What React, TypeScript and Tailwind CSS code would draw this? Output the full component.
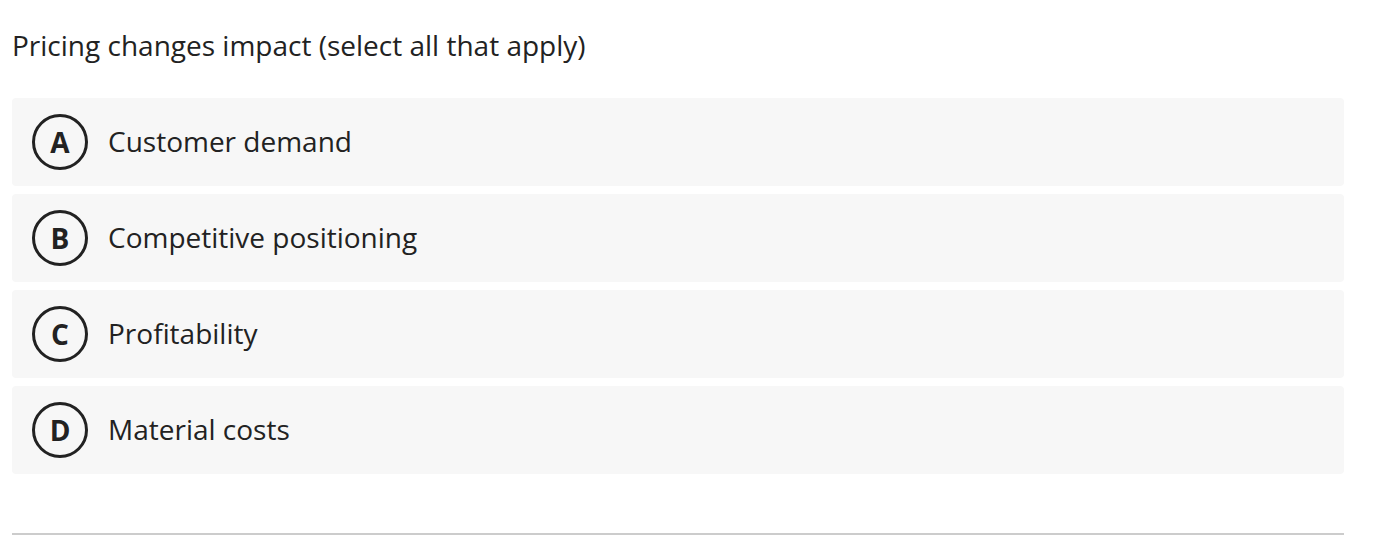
const options = [
  { key: 'A', label: 'Customer demand' },
  { key: 'B', label: 'Competitive positioning' },
  { key: 'C', label: 'Profitability' },
  { key: 'D', label: 'Material costs' },
];

export default function App() {
  return (
    <div
      className="w-[1380px] h-[552px] bg-white text-[#222222] overflow-hidden"
      style={{ fontFamily: '"Open Sans", "Liberation Sans", sans-serif' }}
    >
      <div className="px-3 pt-[26px]">
        {/* Question */}
        <h1 className="w-[1332px] text-[28px] leading-[38px] font-normal">
          Pricing changes impact (select all that apply)
        </h1>

        {/* Options */}
        <div className="mt-[34px] w-[1332px] flex flex-col gap-2">
          {options.map((o) => (
            <div
              key={o.key}
              className="h-[88px] bg-[#f7f7f7] rounded-[4px] pl-5 flex items-center gap-5 cursor-pointer"
            >
              <div className="w-[56px] h-[56px] rounded-full border-[3px] border-[#222222] flex items-center justify-center text-[28px] font-bold leading-none">
                {o.key}
              </div>
              <span className="text-[28px] leading-[38px] -translate-y-px">{o.label}</span>
            </div>
          ))}
        </div>

        {/* Divider */}
        <div className="mt-[59px] w-[1332px] h-[2px] bg-[#cccccc]" />
      </div>
    </div>
  );
}
